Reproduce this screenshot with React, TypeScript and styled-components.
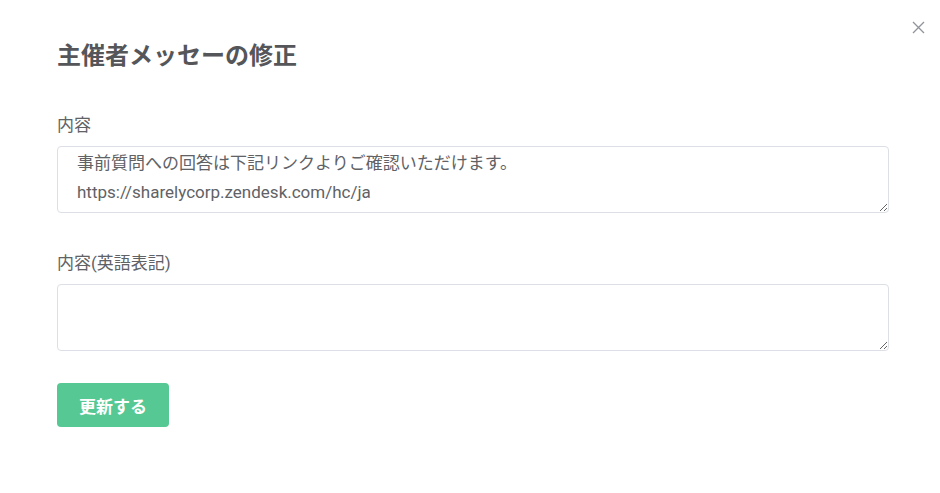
import React from "react";
import styled, { createGlobalStyle } from "styled-components";

const FONT = `Roboto, "Noto Sans CJK JP", "Noto Sans", sans-serif`;

const Global = createGlobalStyle`
  html, body { margin: 0; padding: 0; background: #fff; }
  body { font-family: ${FONT}; }
`;

const Dialog = styled.div`
  position: relative;
  width: 940px;
  height: 493px;
  box-sizing: border-box;
  padding: 37px 51px 0 57px;
  background: #fff;
`;

const Close = styled.button`
  position: absolute;
  top: 19px;
  right: 14px;
  width: 16px;
  height: 16px;
  padding: 0;
  border: none;
  background: none;
  cursor: pointer;
  display: flex;
  align-items: center;
  justify-content: center;
`;

const Title = styled.h2`
  margin: 0;
  font-family: "Noto Sans CJK JP", "Noto Sans", sans-serif;
  font-size: 24px;
  font-weight: 700;
  line-height: 34px;
  color: #55565a;
`;

const Field = styled.div<{ $top: number }>`
  margin-top: ${(p) => p.$top}px;
  display: flex;
  flex-direction: column;
`;

const Label = styled.label`
  font-size: 17px;
  line-height: 24px;
  color: #606266;
  margin-bottom: 9px;
`;

const Area = styled.textarea`
  display: block;
  width: 100%;
  height: 67px;
  box-sizing: border-box;
  padding: 2px 19px;
  border: 1px solid #dcdfe6;
  border-radius: 4px;
  font-family: ${FONT};
  font-size: 17px;
  line-height: 29px;
  color: #606266;
  resize: vertical;
  outline: none;
`;

const Submit = styled.button`
  margin-top: 32px;
  width: 112px;
  height: 44px;
  border: none;
  border-radius: 4px;
  background: #56c893;
  color: #fff;
  font-family: "Noto Sans CJK JP", "Noto Sans", sans-serif;
  font-size: 17px;
  font-weight: 700;
  cursor: pointer;
`;

export default function App() {
  return (
    <>
      <Global />
      <Dialog>
        <Close aria-label="close">
          <svg width="13" height="13" viewBox="0 0 13 13">
            <path d="M1 1L12 12M12 1L1 12" stroke="#909399" strokeWidth="1.3" fill="none" />
          </svg>
        </Close>
        <Title>主催者メッセーの修正</Title>
        <Field $top={42}>
          <Label>内容</Label>
          <Area
            defaultValue={"事前質問への回答は下記リンクよりご確認いただけます。\nhttps://sharelycorp.zendesk.com/hc/ja"}
          />
        </Field>
        <Field $top={38}>
          <Label>内容(英語表記)</Label>
          <Area defaultValue="" />
        </Field>
        <Submit>更新する</Submit>
      </Dialog>
    </>
  );
}
